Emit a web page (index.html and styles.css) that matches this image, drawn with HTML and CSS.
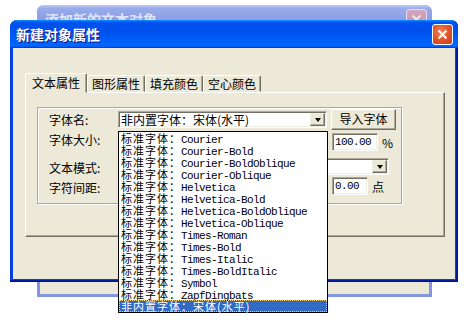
FILE: index.html
```html
<!doctype html>
<html lang="zh">

<head>
  <meta charset="UTF-8" />
  <title>新建对象属性</title>
  <link rel="stylesheet" href="styles.css">
</head>

<body>
  <div class="desk">
    <!-- inactive parent window behind the dialog -->
    <div class="win win-back">
      <div class="title">
        <span class="title-text">添加新的文本对象</span>
        <span class="close close-off">
          <svg width="11" height="11" viewBox="0 0 11 11"><path d="M1.5 1.5 L9.5 9.5 M9.5 1.5 L1.5 9.5" stroke="#f4e6ee" stroke-width="2" /></svg>
        </span>
      </div>
      <div class="client"></div>
    </div>

    <!-- active dialog -->
    <div class="win win-front">
      <div class="title">
        <span class="title-text">新建对象属性</span>
        <span class="close">
          <svg width="11" height="11" viewBox="0 0 11 11"><path d="M1.5 1.5 L9.5 9.5 M9.5 1.5 L1.5 9.5" stroke="#fff" stroke-width="2" /></svg>
        </span>
      </div>
      <div class="client">
        <div class="tabs">
          <div class="tab active">文本属性</div>
          <div class="tab">图形属性</div>
          <div class="tab">填充颜色</div>
          <div class="tab">空心颜色</div>
        </div>
        <div class="panel">
          <div class="group">
            <div class="lbl r1">字体名:</div>
            <div class="combo c-font">
              <span class="combo-text">非内置字体：宋体(水平)</span>
              <span class="combo-btn"><i class="arrow"></i></span>
              <ul class="droplist">
                <li><span class="cn">标准字体：</span><span class="en">Courier</span></li>
                <li><span class="cn">标准字体：</span><span class="en">Courier-Bold</span></li>
                <li><span class="cn">标准字体：</span><span class="en">Courier-BoldOblique</span></li>
                <li><span class="cn">标准字体：</span><span class="en">Courier-Oblique</span></li>
                <li><span class="cn">标准字体：</span><span class="en">Helvetica</span></li>
                <li><span class="cn">标准字体：</span><span class="en">Helvetica-Bold</span></li>
                <li><span class="cn">标准字体：</span><span class="en">Helvetica-BoldOblique</span></li>
                <li><span class="cn">标准字体：</span><span class="en">Helvetica-Oblique</span></li>
                <li><span class="cn">标准字体：</span><span class="en">Times-Roman</span></li>
                <li><span class="cn">标准字体：</span><span class="en">Times-Bold</span></li>
                <li><span class="cn">标准字体：</span><span class="en">Times-Italic</span></li>
                <li><span class="cn">标准字体：</span><span class="en">Times-BoldItalic</span></li>
                <li><span class="cn">标准字体：</span><span class="en">Symbol</span></li>
                <li><span class="cn">标准字体：</span><span class="en">ZapfDingbats</span></li>
                <li class="sel"><span class="cn">非内置字体：宋体(水平)</span></li>
              </ul>
            </div>
            <div class="btn">导入字体</div>

            <div class="lbl r2">字体大小:</div>
            <div class="cell r2 wide-right">
              <span class="field f-size">100.00</span>
              <span class="unit">%</span>
            </div>

            <div class="lbl r3">文本模式:</div>
            <div class="combo c-mode">
              <span class="combo-btn"><i class="arrow"></i></span>
            </div>

            <div class="lbl r4">字符间距:</div>
            <div class="cell r4 wide-right">
              <span class="field f-gap">0.00</span>
              <span class="unit">点</span>
            </div>
          </div>
        </div>
      </div>
    </div>
  </div>
</body>

</html>
```

FILE: styles.css
```css
body {
  margin: 0;
  background: #ffffff;
  font-family: "Noto Sans CJK SC", sans-serif;
  font-size: 12px;
  color: #000;
  overflow: hidden;
}

.desk {
  position: relative;
  width: 476px;
  height: 320px;
}

/* Windows */
.win {
  position: absolute;
  display: flex;
  flex-direction: column;
  box-sizing: border-box;
  border-radius: 7px 7px 0 0;
}

.win .title {
  height: 28px;
  flex: none;
  display: flex;
  align-items: center;
  justify-content: space-between;
  border-radius: 7px 7px 0 0;
  font-size: 14px;
  font-weight: bold;
}

.win .client {
  flex: 1;
  background: #ece9d8;
}

.win-back {
  left: 37px;
  top: 5px;
  width: 395px;
  height: 292px;
  padding: 0 3px 3px;
  background: #8395e0;
}

.win-back .title {
  margin: 0 -3px;
  padding: 0 5px 0 8px;
  background: linear-gradient(180deg, #c2ccf5 0, #9aabea 12%, #8c9fe5 50%, #95a9ec 90%, #8799e2 100%);
  color: #dde5fa;
}

.win-front {
  left: 10px;
  top: 20px;
  width: 448px;
  height: 262px;
  padding: 0 3px 3px;
  background: #0842d8;
  box-shadow: inset -1px -1px #00138c, inset -2px -2px #001ea0;
}

.win-front .title {
  margin: 0 -3px;
  padding: 0 5px 0 6px;
  background: linear-gradient(180deg, #0997ff, #0053ee 8%, #0050ee 40%, #06f 88%, #06f 93%, #005bff 95%, #003dd7 96%, #003dd7);
  color: #fff;
  text-shadow: 1px 1px #0f1089;
}

.close {
  width: 21px;
  height: 21px;
  box-sizing: border-box;
  border: 1px solid #fff;
  border-radius: 3px;
  display: flex;
  align-items: center;
  justify-content: center;
  background: radial-gradient(circle at 40% 35%, #f0835c 0, #e2582f 45%, #c63c18 100%);
}

.close-off {
  border-color: #e8dcef;
  background: linear-gradient(180deg, #d4a7bd, #c28fab);
}

/* Tabs */
.tabs {
  display: flex;
  align-items: flex-end;
  height: 19px;
  margin: 25px 0 0 12px;
  position: relative;
  z-index: 1;
}

.tab {
  height: 17px;
  box-sizing: border-box;
  padding: 0 4px;
  border: 1px solid;
  border-color: #fff #716f64 transparent #fff;
  box-shadow: inset -1px 0 #aca899;
  border-radius: 2px 2px 0 0;
  line-height: 15px;
  white-space: nowrap;
}

.tab.active {
  height: 20px;
  margin-bottom: -1px;
  padding: 0 6px;
  background: #ece9d8;
  line-height: 17px;
}

.panel {
  margin-left: 12px;
  width: 420px;
  height: 145px;
  box-sizing: border-box;
  border: 1px solid;
  border-color: #fff #716f64 #716f64 #fff;
  box-shadow: inset -1px -1px #aca899;
  padding: 14px 0 0 11px;
}

/* Group box with the form */
.group {
  width: 365px;
  height: 97px;
  box-sizing: border-box;
  border: 1px solid #aca899;
  box-shadow: inset 1px 1px #fff, 1px 1px #fff;
  padding: 1px 0 0 11px;
  display: grid;
  grid-template-columns: 69px 213px 65px;
  grid-template-rows: 22px 25px 21px 18px;
  align-items: start;
}

.lbl {
  grid-column: 1;
  line-height: 14px;
  white-space: nowrap;
}

.lbl.r1 { grid-row: 1; margin-top: 4px; }
.lbl.r2 { grid-row: 2; margin-top: 2px; }
.lbl.r3 { grid-row: 3; margin-top: 5px; }
.lbl.r4 { grid-row: 4; margin-top: 4px; }

.cell {
  display: flex;
  align-items: center;
}

.cell.r2 { grid-row: 2; margin-top: 2px; }
.cell.r4 { grid-row: 4; }

.wide-right {
  grid-column: 3 / span 1;
  margin-left: 1px;
}

/* Sunken controls */
.combo,
.field {
  box-sizing: border-box;
  background: #fff;
  border: 1px solid;
  border-color: #aca899 #fff #fff #aca899;
  box-shadow: inset 1px 1px #716f64, inset -1px -1px #f1efe2;
}

.combo {
  position: relative;
  height: 17px;
  margin-top: 2px;
  display: flex;
  align-items: center;
}

.c-font {
  grid-row: 1;
  grid-column: 2;
  width: 209px;
  z-index: 2;
}

.c-mode {
  grid-row: 3;
  grid-column: 2 / span 2;
  width: 271px;
}

.combo-text {
  padding-left: 2px;
  line-height: 13px;
  white-space: nowrap;
}

.combo-btn {
  position: absolute;
  right: 1px;
  top: 1px;
  width: 15px;
  height: 13px;
  box-sizing: border-box;
  background: #ece9d8;
  border: 1px solid;
  border-color: #f1efe2 #716f64 #716f64 #f1efe2;
  box-shadow: inset -1px -1px #aca899;
  display: flex;
  align-items: center;
  justify-content: center;
}

.arrow {
  width: 0;
  height: 0;
  border-left: 3.5px solid transparent;
  border-right: 3.5px solid transparent;
  border-top: 4px solid #000;
}

.field {
  height: 18px;
  padding-left: 2px;
  font-family: "Liberation Mono", monospace;
  font-size: 11px;
  letter-spacing: -0.6px;
  line-height: 16px;
}

.f-size { width: 46px; }
.f-gap { width: 36px; }

.unit {
  margin-left: 4px;
  font-size: 12px;
}

.btn {
  grid-row: 1;
  grid-column: 3;
  width: 65px;
  height: 21px;
  box-sizing: border-box;
  border: 1px solid;
  border-color: #fff #716f64 #716f64 #fff;
  box-shadow: inset -1px -1px #aca899;
  background: #ece9d8;
  text-align: center;
  line-height: 18px;
}

/* Opened font list */
.droplist {
  position: absolute;
  left: -1px;
  top: 19px;
  width: 210px;
  height: 182px;
  box-sizing: border-box;
  margin: 0;
  padding: 0;
  list-style: none;
  background: #fff;
  border: 1px solid #000;
}

.droplist li {
  height: 12px;
  line-height: 12px;
  padding-left: 2px;
  white-space: nowrap;
}

.droplist .cn {
  font-size: 11px;
  letter-spacing: 1px;
}

.droplist .en {
  font-family: "Liberation Mono", monospace;
  font-size: 11px;
  letter-spacing: -0.6px;
}

.droplist li.sel {
  background: #316ac5;
  color: #fff;
  outline: 1px dotted #f3d27a;
  outline-offset: -1px;
}
```
